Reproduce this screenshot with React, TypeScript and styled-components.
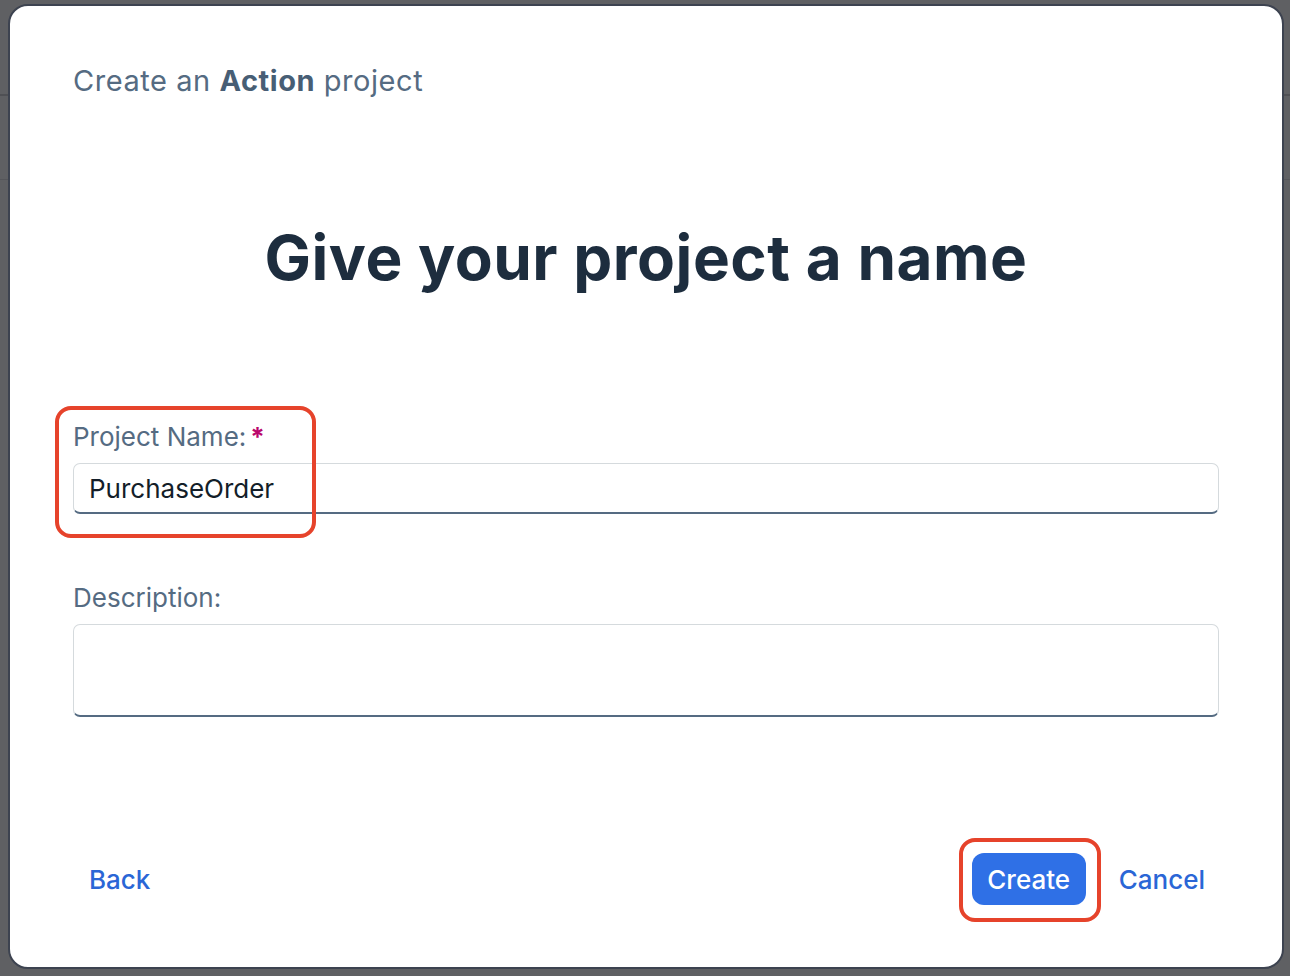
import React from "react";
import styled, { createGlobalStyle } from "styled-components";

const Global = createGlobalStyle`
  html, body { margin: 0; padding: 0; }
  body {
    background: #5f6063;
    font-family: Inter, "Noto Sans", "Liberation Sans", sans-serif;
    -webkit-font-smoothing: antialiased;
  }
`;

const Backdrop = styled.div`
  box-sizing: border-box;
  width: 1290px;
  height: 976px;
  padding: 4px 6px 7px 8px;
  background:
    linear-gradient(#4f5054, #4f5054) 0 94px / 100% 2px no-repeat,
    linear-gradient(#55565a, #55565a) 0 179px / 100% 1px no-repeat,
    #5f6063;
  display: flex;
`;

const Dialog = styled.div`
  position: relative;
  box-sizing: border-box;
  flex: 1;
  background: #ffffff;
  border: 2px solid #3d4350;
  border-radius: 20px;
  padding: 58px 63px 62px 63px;
  display: flex;
  flex-direction: column;
`;

const Title = styled.div`
  font-size: 29px;
  line-height: 34px;
  color: #556b82;
  letter-spacing: 0.55px;
  b { font-weight: 700; color: #475e75; }
`;

const Heading = styled.h1`
  margin: 121px 0 0;
  text-align: center;
  font-size: 62px;
  line-height: 77px;
  font-weight: 700;
  color: #1d2d3e;
  letter-spacing: 0.5px;
`;

const Field = styled.div<{ $top: number }>`
  margin-top: ${(p) => p.$top}px;
  display: flex;
  flex-direction: column;
`;

const Label = styled.label`
  font-size: 26px;
  line-height: 32px;
  color: #556b82;
  margin-bottom: 10px;
`;

const Required = styled.span`
  color: #ba066c;
  font-weight: 700;
  margin-left: 4px;
`;

const Input = styled.div<{ $height: number }>`
  box-sizing: border-box;
  height: ${(p) => p.$height}px;
  border: 1px solid #d5dadd;
  border-bottom: 2px solid #556b82;
  border-radius: 7px;
  padding: 0 15px;
  display: flex;
  align-items: center;
  font-size: 26px;
  color: #131e29;
`;

const Footer = styled.div`
  margin-top: auto;
  display: flex;
  align-items: center;
  padding: 0 14px 0 16px;
`;

const LinkButton = styled.button`
  background: none;
  border: none;
  padding: 0;
  font-family: inherit;
  font-size: 26px;
  font-weight: 500;
  color: #2a66d6;
  cursor: pointer;
`;

const Spacer = styled.div`
  flex: 1;
`;

const PrimaryButton = styled.button`
  height: 52px;
  width: 114px;
  border: none;
  border-radius: 12px;
  background: #2f70e6;
  color: #ffffff;
  font-family: inherit;
  font-size: 26px;
  font-weight: 500;
  margin-right: 33px;
`;

const Annotation = styled.div<{ $l: number; $t: number; $w: number; $h: number }>`
  position: absolute;
  left: ${(p) => p.$l}px;
  top: ${(p) => p.$t}px;
  width: ${(p) => p.$w}px;
  height: ${(p) => p.$h}px;
  box-sizing: border-box;
  border: 4px solid #e6432b;
  border-radius: 16px;
  pointer-events: none;
`;

export default function App() {
  return (
    <>
      <Global />
      <Backdrop>
        <Dialog>
          <Title>
            Create an <b>Action</b> project
          </Title>
          <Heading>Give your project a name</Heading>
          <Field $top={125}>
            <Label>
              Project Name:<Required>*</Required>
            </Label>
            <Input $height={51}>PurchaseOrder</Input>
          </Field>
          <Field $top={68}>
            <Label>Description:</Label>
            <Input $height={93} />
          </Field>
          <Footer>
            <LinkButton>Back</LinkButton>
            <Spacer />
            <PrimaryButton>Create</PrimaryButton>
            <LinkButton>Cancel</LinkButton>
          </Footer>
          <Annotation $l={45} $t={400} $w={261} $h={132} />
          <Annotation $l={949} $t={832} $w={142} $h={84} />
        </Dialog>
      </Backdrop>
    </>
  );
}
